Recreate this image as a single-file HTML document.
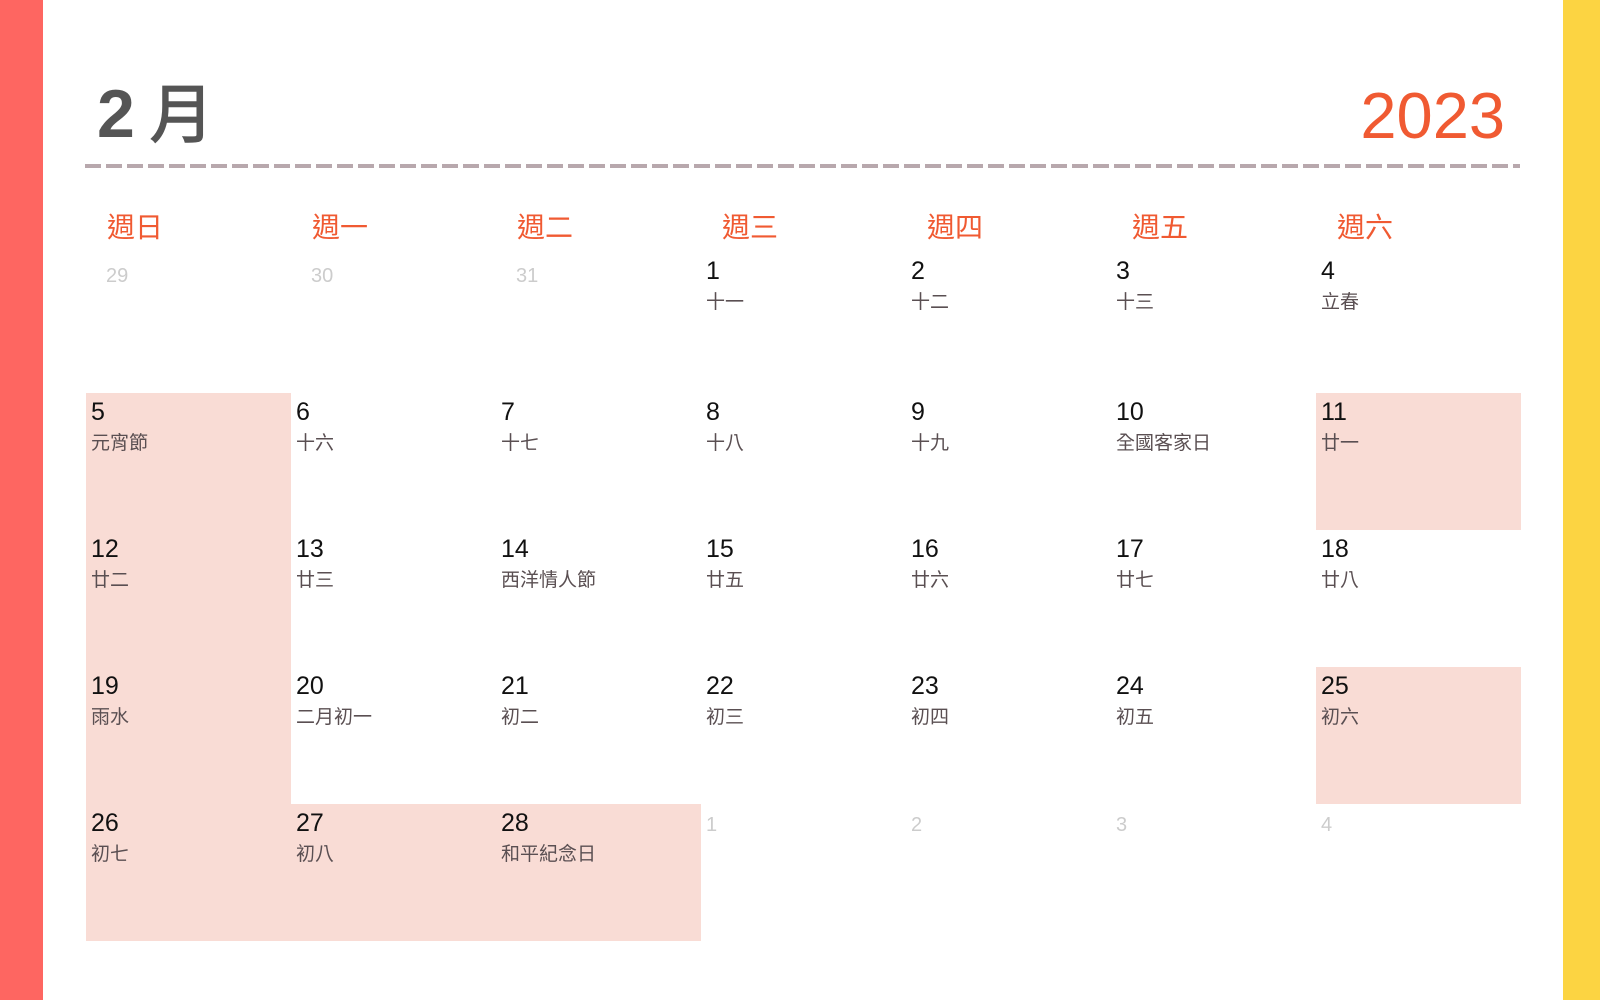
<!DOCTYPE html>
<html><head><meta charset="utf-8"><style>
*{margin:0;padding:0;box-sizing:border-box}
body{width:1600px;height:1000px;background:#fff;position:relative;overflow:hidden;font-family:"Liberation Sans","Noto Sans CJK TC",sans-serif}
.l{position:absolute;left:0;top:0;width:43px;height:1000px;background:#fe6661}
.r{position:absolute;left:1563px;top:0;width:37px;height:1000px;background:#fcd442}
.m{position:absolute;left:97px;top:72px;font-size:68px;color:#555;line-height:85px;font-weight:bold;letter-spacing:-2px}
.m span{font-size:64px;font-weight:normal;-webkit-text-stroke:1.5px #555}
.y{position:absolute;right:95px;top:73px;font-size:65px;color:#f05a32;line-height:85px}
.d{position:absolute;left:85px;top:164px;width:1435px;height:4px;background:repeating-linear-gradient(90deg,#b8a8ad 0 16px,transparent 16px 21px)}
.w{position:absolute;top:210px;font-size:28px;color:#f05a32;line-height:36px}
.c{position:absolute;width:205px;height:137px}
.p{background:#f9dcd5}
.n{position:absolute;left:5px;top:4px;font-size:25px;line-height:30px;color:#111}
.s{position:absolute;left:5px;top:39px;font-size:19px;line-height:24px;color:#5a4f52}
.r1 .n{top:0}
.r1 .s{top:35px}
.g .n{color:#ccc;font-size:20px;top:6px}
.r1.g .n{left:20px;top:5px}
</style></head><body>
<div class="l"></div><div class="r"></div>
<div class="m">2 <span>月</span></div><div class="y">2023</div>
<div class="d"></div>
<div class="w" style="left:107px">週日</div>
<div class="w" style="left:312px">週一</div>
<div class="w" style="left:517px">週二</div>
<div class="w" style="left:722px">週三</div>
<div class="w" style="left:927px">週四</div>
<div class="w" style="left:1132px">週五</div>
<div class="w" style="left:1337px">週六</div>

<div class="c g r1" style="left:86px;top:256px"><div class="n">29</div></div>
<div class="c g r1" style="left:291px;top:256px"><div class="n">30</div></div>
<div class="c g r1" style="left:496px;top:256px"><div class="n">31</div></div>
<div class="c r1" style="left:701px;top:256px"><div class="n">1</div><div class="s">十一</div></div>
<div class="c r1" style="left:906px;top:256px"><div class="n">2</div><div class="s">十二</div></div>
<div class="c r1" style="left:1111px;top:256px"><div class="n">3</div><div class="s">十三</div></div>
<div class="c r1" style="left:1316px;top:256px"><div class="n">4</div><div class="s">立春</div></div>

<div class="c p" style="left:86px;top:393px"><div class="n">5</div><div class="s">元宵節</div></div>
<div class="c" style="left:291px;top:393px"><div class="n">6</div><div class="s">十六</div></div>
<div class="c" style="left:496px;top:393px"><div class="n">7</div><div class="s">十七</div></div>
<div class="c" style="left:701px;top:393px"><div class="n">8</div><div class="s">十八</div></div>
<div class="c" style="left:906px;top:393px"><div class="n">9</div><div class="s">十九</div></div>
<div class="c" style="left:1111px;top:393px"><div class="n">10</div><div class="s">全國客家日</div></div>
<div class="c p" style="left:1316px;top:393px"><div class="n">11</div><div class="s">廿一</div></div>

<div class="c p" style="left:86px;top:530px"><div class="n">12</div><div class="s">廿二</div></div>
<div class="c" style="left:291px;top:530px"><div class="n">13</div><div class="s">廿三</div></div>
<div class="c" style="left:496px;top:530px"><div class="n">14</div><div class="s">西洋情人節</div></div>
<div class="c" style="left:701px;top:530px"><div class="n">15</div><div class="s">廿五</div></div>
<div class="c" style="left:906px;top:530px"><div class="n">16</div><div class="s">廿六</div></div>
<div class="c" style="left:1111px;top:530px"><div class="n">17</div><div class="s">廿七</div></div>
<div class="c" style="left:1316px;top:530px"><div class="n">18</div><div class="s">廿八</div></div>

<div class="c p" style="left:86px;top:667px"><div class="n">19</div><div class="s">雨水</div></div>
<div class="c" style="left:291px;top:667px"><div class="n">20</div><div class="s">二月初一</div></div>
<div class="c" style="left:496px;top:667px"><div class="n">21</div><div class="s">初二</div></div>
<div class="c" style="left:701px;top:667px"><div class="n">22</div><div class="s">初三</div></div>
<div class="c" style="left:906px;top:667px"><div class="n">23</div><div class="s">初四</div></div>
<div class="c" style="left:1111px;top:667px"><div class="n">24</div><div class="s">初五</div></div>
<div class="c p" style="left:1316px;top:667px"><div class="n">25</div><div class="s">初六</div></div>

<div class="c p" style="left:86px;top:804px"><div class="n">26</div><div class="s">初七</div></div>
<div class="c p" style="left:291px;top:804px"><div class="n">27</div><div class="s">初八</div></div>
<div class="c p" style="left:496px;top:804px"><div class="n">28</div><div class="s">和平紀念日</div></div>
<div class="c g" style="left:701px;top:804px"><div class="n">1</div></div>
<div class="c g" style="left:906px;top:804px"><div class="n">2</div></div>
<div class="c g" style="left:1111px;top:804px"><div class="n">3</div></div>
<div class="c g" style="left:1316px;top:804px"><div class="n">4</div></div>
</body></html>
